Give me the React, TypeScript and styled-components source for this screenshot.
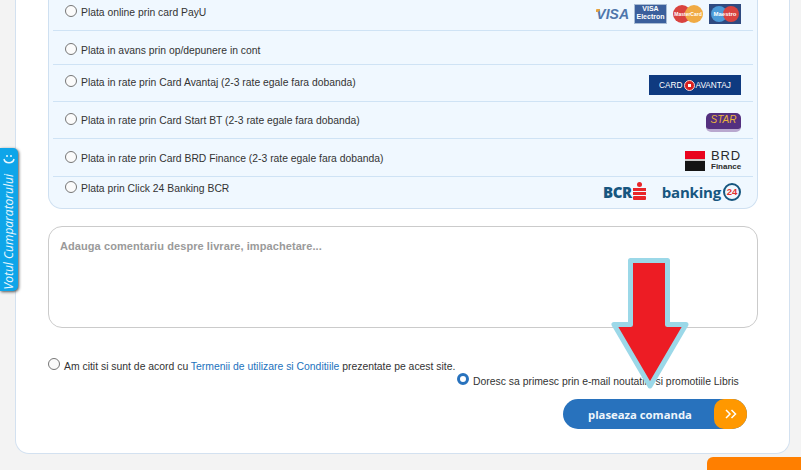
import styled, { createGlobalStyle } from "styled-components";

const GlobalStyle = createGlobalStyle`
  html, body {
    margin: 0;
    padding: 0;
    background: #f3f3f3;
    font-family: "Liberation Sans", Arial, sans-serif;
  }
`;

const Page = styled.div`
  position: relative;
  width: 801px;
  height: 470px;
  overflow: hidden;
  padding-left: 15px;
  box-sizing: border-box;
`;

const Card = styled.div`
  width: 775px;
  height: 454px;
  box-sizing: border-box;
  background: #fff;
  border: 1px solid #d3e1f0;
  border-top: none;
  border-radius: 0 0 14px 14px;
  padding: 0 31px 0 32px;
`;

const PaymentBox = styled.div`
  height: 209px;
  box-sizing: border-box;
  background: #f0f8ff;
  border: 1px solid #cfe0f1;
  border-top: none;
  border-radius: 0 0 14px 14px;
  padding: 0 4px;
`;

const Row = styled.div<{ $height: number; $top: number; $last?: boolean }>`
  height: ${({ $height }) => $height}px;
  box-sizing: border-box;
  display: flex;
  align-items: flex-start;
  justify-content: space-between;
  padding: ${({ $top }) => $top}px 12px 0 12px;
  border-bottom: ${({ $last }) => ($last ? "none" : "1px solid #cfe3f5")};
`;

const RowLabel = styled.label`
  display: flex;
  align-items: flex-start;
  gap: 4px;
  font-size: 10.35px;
  line-height: 13px;
  color: #333;
`;

const Radio = styled.span<{ $checked?: boolean }>`
  flex: none;
  width: 12px;
  height: 12px;
  border-radius: 50%;
  box-sizing: border-box;
  background: ${({ $checked }) => ($checked ? "#fff" : "#fbfbfb")};
  border: ${({ $checked }) => ($checked ? "3px solid #2872bd" : "1px solid #767676")};
  margin-top: -1px;
`;

const Logos = styled.div<{ $mt: number }>`
  display: flex;
  align-items: center;
  margin-top: ${({ $mt }) => $mt}px;
`;

const VisaWord = styled.span`
  position: relative;
  font-size: 14px;
  line-height: 15px;
  font-weight: 700;
  font-style: italic;
  color: #4f76ab;
  margin-right: 5px;

  &::before {
    content: "";
    position: absolute;
    left: 0;
    top: 2px;
    width: 4px;
    height: 3px;
    background: #e8a33d;
    border-radius: 1px 0 3px 0;
  }
`;

const ElectronCard = styled.span`
  width: 33px;
  height: 20px;
  box-sizing: border-box;
  background: #3b5f9c;
  border: 1px solid #a9bcd4;
  color: #fff;
  font-size: 7px;
  line-height: 8px;
  font-weight: 700;
  text-align: center;
  margin-right: 6px;
`;

const CardCircles = styled.svg`
  display: block;
`;

const AvantajLogo = styled.div`
  width: 92px;
  height: 20px;
  background: #0f3a80;
  display: flex;
  align-items: center;
  justify-content: center;
  gap: 1px;
  font-size: 8.3px;
  color: #fff;
`;

const AvantajDot = styled.span`
  display: flex;
  align-items: center;
  justify-content: center;
  width: 11px;
  height: 11px;
  border-radius: 50%;
  background: #d9201f;
  border: 1px solid #f3d5d5;
  box-sizing: border-box;

  &::after {
    content: "";
    width: 3px;
    height: 3px;
    background: #fff;
  }
`;

const StarLogo = styled.div`
  width: 35px;
  height: 19px;
  box-sizing: border-box;
  border-radius: 5px;
  background: #54307f;
  color: #eab33c;
  font-size: 10px;
  line-height: 14px;
  font-style: italic;
  text-align: center;
  border-bottom: 3px solid #b9a8cf;
`;

const BrdSquare = styled.div`
  width: 20px;
  height: 20px;
  margin-right: 6px;
  background: linear-gradient(#e9041e 0 8px, #c9c9c9 8px 10px, #141414 10px);
`;

const BrdText = styled.div`
  width: 30px;
  color: #2b2b2b;
  font-size: 13px;
  line-height: 12px;
  letter-spacing: 0.8px;
`;

const BrdSub = styled.div`
  font-size: 8px;
  line-height: 9px;
  letter-spacing: 0;
  font-weight: 700;
`;

const BcrWord = styled.span`
  font-family: "Open Sans", sans-serif;
  font-size: 15px;
  line-height: 18px;
  font-weight: 800;
  color: #17567f;
  letter-spacing: -0.4px;
`;

const BankingWord = styled(BcrWord)`
  font-size: 15px;
  font-weight: 700;
  letter-spacing: -0.2px;
  margin-left: 15px;
`;

const Badge24 = styled.span`
  width: 18px;
  height: 18px;
  margin-left: 2px;
  box-sizing: border-box;
  border: 2px solid #17567f;
  border-radius: 50%;
  color: #e2322f;
  font-size: 9.5px;
  line-height: 14px;
  font-weight: 700;
  text-align: center;
`;

const CommentBox = styled.textarea`
  display: block;
  width: 710px;
  height: 102px;
  box-sizing: border-box;
  margin-top: 17px;
  padding: 13px 11px;
  border: 1px solid #cbcbcb;
  border-radius: 14px;
  background: #fff;
  resize: none;
  outline: none;
  font-family: "Liberation Sans", Arial, sans-serif;
  font-size: 11px;
  font-weight: 700;
  letter-spacing: 0.08px;

  &::placeholder {
    color: #9a9a9a;
    opacity: 1;
  }
`;

const Consent = styled.div`
  display: flex;
  align-items: flex-start;
  gap: 4px;
  margin-top: 31px;
  font-size: 10.4px;
  line-height: 13px;
  color: #333;
`;

const ConsentText = styled.span`
  padding-top: 1px;
`;

const TermsLink = styled.a`
  color: #2272bd;
  text-decoration: none;
`;

const Newsletter = styled(Consent)`
  margin-top: 1px;
  margin-left: 409px;
`;

const Actions = styled.div`
  display: flex;
  justify-content: flex-end;
  margin-top: 11px;
  padding-right: 11px;
`;

const SubmitButton = styled.button`
  position: relative;
  width: 184px;
  height: 30px;
  padding: 0 56px 0 25px;
  border: none;
  border-radius: 15px;
  overflow: hidden;
  background: #2872bd;
  color: #eef5fb;
  font-family: "Open Sans", sans-serif;
  font-size: 11.3px;
  font-weight: 700;
  text-align: left;
  white-space: nowrap;
`;

const SubmitArrows = styled.span`
  position: absolute;
  top: 0;
  right: 0;
  width: 33px;
  height: 30px;
  border-radius: 10px 0 0 10px;
  background: #ff9800;
  display: flex;
  align-items: center;
  justify-content: center;
`;

const FeedbackTab = styled.div`
  position: absolute;
  left: 0;
  top: 148px;
  width: 18px;
  height: 143px;
  background: #0ea5e9;
  border-radius: 0 5px 5px 0;
  box-shadow: 1px 1px 3px #555;
  display: flex;
  flex-direction: column;
  align-items: center;
  justify-content: space-between;
  padding: 7px 0 2px;
  box-sizing: border-box;
`;

const FeedbackLabel = styled.span`
  writing-mode: vertical-rl;
  transform: rotate(180deg);
  color: #e8f7ff;
  font-family: "Open Sans", sans-serif;
  font-size: 12px;
  line-height: 14px;
  font-style: italic;
  white-space: nowrap;
`;

const OrangeTab = styled.div`
  position: absolute;
  left: 707px;
  top: 457px;
  width: 94px;
  height: 13px;
  background: #ff7f00;
  border-radius: 6px 0 0 0;
`;

const ArrowMark = styled.svg`
  position: absolute;
  left: 608px;
  top: 255px;
`;

const rows = [
  { label: "Plata online prin card PayU", height: 31, top: 6 },
  { label: "Plata in avans prin op/depunere in cont", height: 34, top: 13 },
  { label: "Plata in rate prin Card Avantaj (2-3 rate egale fara dobanda)", height: 37, top: 11 },
  { label: "Plata in rate prin Card Start BT (2-3 rate egale fara dobanda)", height: 37, top: 12 },
  { label: "Plata in rate prin Card BRD Finance (2-3 rate egale fara dobanda)", height: 38, top: 13 },
  { label: "Plata prin Click 24 Banking BCR", height: 32, top: 5 },
];

const logoFor = (index: number) => {
  switch (index) {
    case 0:
      return (
        <Logos $mt={-2}>
          <VisaWord>VISA</VisaWord>
          <ElectronCard>
            VISA
            <br />
            Electron
          </ElectronCard>
          <CardCircles width="68" height="20" viewBox="0 0 68 20">
            <circle cx="9" cy="10" r="9" fill="#d9433f" />
            <circle cx="21" cy="10" r="9" fill="#f0aa44" />
            <text x="15" y="12" fontSize="5" fontWeight="700" fill="#fff" textAnchor="middle">MasterCard</text>
            <rect x="36" y="0" width="32" height="20" fill="#2f4a80" />
            <circle cx="46" cy="10" r="8" fill="#4c9bd8" />
            <circle cx="58" cy="10" r="8" fill="#d9433f" />
            <text x="52" y="12" fontSize="6" fontWeight="700" fill="#fff" textAnchor="middle">Maestro</text>
          </CardCircles>
        </Logos>
      );
    case 2:
      return (
        <Logos $mt={-1}>
          <AvantajLogo>
            CARD
            <AvantajDot />
            AVANTAJ
          </AvantajLogo>
        </Logos>
      );
    case 3:
      return (
        <Logos $mt={-1}>
          <StarLogo>STAR</StarLogo>
        </Logos>
      );
    case 4:
      return (
        <Logos $mt={-2}>
          <BrdSquare />
          <BrdText>
            BRD
            <BrdSub>Finance</BrdSub>
          </BrdText>
        </Logos>
      );
    case 5:
      return (
        <Logos $mt={0}>
          <BcrWord>BCR</BcrWord>
          <svg width="15" height="19" viewBox="0 0 15 19">
            <circle cx="7.5" cy="2.5" r="2.5" fill="#e8262a" />
            <rect x="1" y="6" width="13" height="3" fill="#e8262a" />
            <rect x="1" y="10" width="13" height="3" fill="#e8262a" />
            <rect x="1" y="14" width="13" height="4" rx="1" fill="#e8262a" />
          </svg>
          <BankingWord>banking</BankingWord>
          <Badge24>24</Badge24>
        </Logos>
      );
    default:
      return null;
  }
};

export default function App() {
  return (
    <Page>
      <GlobalStyle />
      <Card>
        <PaymentBox>
          {rows.map((row, i) => (
            <Row key={row.label} $height={row.height} $top={row.top} $last={i === rows.length - 1}>
              <RowLabel>
                <Radio />
                {row.label}
              </RowLabel>
              {logoFor(i)}
            </Row>
          ))}
        </PaymentBox>
        <CommentBox placeholder="Adauga comentariu despre livrare, impachetare..." />
        <Consent>
          <Radio />
          <ConsentText>
            Am citit si sunt de acord cu <TermsLink>Termenii de utilizare si Conditiile</TermsLink> prezentate pe acest site.
          </ConsentText>
        </Consent>
        <Newsletter>
          <Radio $checked />
          <ConsentText>Doresc sa primesc prin e-mail noutatile si promotiile Libris</ConsentText>
        </Newsletter>
        <Actions>
          <SubmitButton>
            plaseaza comanda
            <SubmitArrows>
              <svg width="12" height="10" viewBox="0 0 12 10" fill="none" stroke="#fff" strokeWidth="1.5">
                <path d="M1 1l4 4-4 4M6.5 1l4 4-4 4" />
              </svg>
            </SubmitArrows>
          </SubmitButton>
        </Actions>
      </Card>
      <FeedbackTab>
        <svg width="12" height="10" viewBox="0 0 12 10" fill="none" stroke="#e8f7ff" strokeWidth="1.5">
          <path d="M1 4c1 5 9 5 10 0" />
          <path d="M4 0v2M8 0v2" />
        </svg>
        <FeedbackLabel>Votul Cumparatorului</FeedbackLabel>
      </FeedbackTab>
      <OrangeTab />
      <ArrowMark width="84" height="138" viewBox="0 0 84 138">
        <polygon
          points="22.5,5.5 59.5,5.5 59.5,69.5 78,69.5 42,131 6,69.5 22.5,69.5"
          fill="#ed1c24"
          stroke="#9bd8e8"
          strokeWidth="5"
          strokeLinejoin="round"
        />
      </ArrowMark>
    </Page>
  );
}
